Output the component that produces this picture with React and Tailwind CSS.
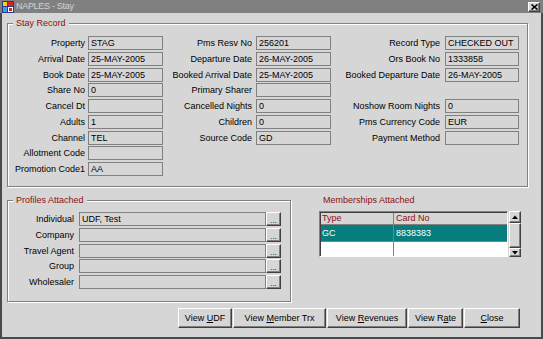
import React from 'react'

// Stay record: three columns of label/field rows
const STAY_COLUMNS = [
  {
    labelW: 'w-[77px]',
    gap: 'ml-[3px]',
    fieldW: 'w-[75px]',
    rows: [
      ['Property', 'STAG'],
      ['Arrival Date', '25-MAY-2005'],
      ['Book Date', '25-MAY-2005'],
      ['Share No', '0'],
      ['Cancel Dt', ''],
      ['Adults', '1'],
      ['Channel', 'TEL'],
      ['Allotment Code', ''],
      ['Promotion Code1', 'AA'],
    ],
  },
  {
    labelW: 'w-[89px]',
    gap: 'ml-[4px]',
    fieldW: 'w-[75px]',
    rows: [
      ['Pms Resv No', '256201'],
      ['Departure Date', '26-MAY-2005'],
      ['Booked Arrival Date', '25-MAY-2005'],
      ['Primary Sharer', ''],
      ['Cancelled Nights', '0'],
      ['Children', '0'],
      ['Source Code', 'GD'],
    ],
  },
  {
    labelW: 'w-[109px]',
    gap: 'ml-[5px]',
    fieldW: 'w-[74px]',
    rows: [
      ['Record Type', 'CHECKED OUT'],
      ['Ors Book No', '1333858'],
      ['Booked Departure Date', '26-MAY-2005'],
      null,
      ['Noshow Room Nights', '0'],
      ['Pms Currency Code', 'EUR'],
      ['Payment Method', ''],
    ],
  },
]

const PROFILES = [
  ['Individual', 'UDF, Test'],
  ['Company', ''],
  ['Travel Agent', ''],
  ['Group', ''],
  ['Wholesaler', ''],
]

function Field({ value, className = '' }) {
  return (
    <div className={`h-[14px] border border-[#808080] px-[2px] leading-[12px] whitespace-nowrap overflow-hidden ${className}`}>
      {value}
    </div>
  )
}

function Group({ title, className = '', children }) {
  return (
    <div className={`relative border border-[#808080] shadow-[inset_1px_1px_0_#fff,1px_1px_0_#fff] ${className}`}>
      <span className="absolute left-[5px] -top-[7px] px-[3px] bg-[#d6d6d6] leading-[12px] text-[#8b1010]">
        {title}
      </span>
      {children}
    </div>
  )
}

const raised = 'border border-t-white border-l-white border-r-[#404040] border-b-[#404040] shadow-[inset_-1px_-1px_0_#808080]'

function DialogButton({ w, children }) {
  return (
    <button className={`${w} h-[20px] ${raised} bg-[#d6d6d6] text-center leading-[17px]`}>
      {children}
    </button>
  )
}

function TitleIcon() {
  return (
    <svg width="12" height="12" viewBox="0 0 12 12">
      <rect x="0" y="0" width="12" height="12" fill="#2b3a8c" />
      <rect x="1" y="1" width="4" height="4" fill="#f2d21b" />
      <rect x="6" y="1" width="5" height="4" fill="#d8261c" />
      <rect x="1" y="6" width="4" height="5" fill="#3aa0e0" />
      <rect x="6" y="6" width="5" height="5" fill="#ffffff" />
      <rect x="7" y="7" width="3" height="3" fill="#d8261c" />
    </svg>
  )
}

export default function App() {
  return (
    <div className="w-[543px] h-[339px] flex flex-col bg-[#d6d6d6] text-black text-[9px] font-['Liberation_Sans',Arial,sans-serif]">
      {/* title bar */}
      <div className="h-[13px] flex items-center bg-[#808080] pl-[2px] pr-[3px]">
        <TitleIcon />
        <span className="ml-[2px] text-[9px] tracking-[-0.3px] text-[#d4d4d4]">NAPLES - Stay</span>
        <div className={`ml-auto w-[12px] h-[10px] ${raised} bg-[#d6d6d6] flex items-center justify-center`}>
          <svg width="7" height="6" viewBox="0 0 7 6">
            <path d="M0.5 0.5 L6.5 5.5 M6.5 0.5 L0.5 5.5" stroke="#000" strokeWidth="1.6" />
          </svg>
        </div>
      </div>

      <div className="flex-1 flex flex-col border-l-2 border-r-2 border-b-2 border-[#4a4a4a]">
        <Group title="Stay Record" className="mt-[10px] ml-[5px] w-[521px] h-[164px]">
          <div className="flex pt-[12px]">
            {STAY_COLUMNS.map((col, ci) => (
              <div key={ci} className="flex flex-col gap-[1.75px]">
                {col.rows.map((row, ri) =>
                  row ? (
                    <div key={ri} className="flex items-center">
                      <span className={`${col.labelW} text-right leading-[14px] whitespace-nowrap`}>{row[0]}</span>
                      <Field value={row[1]} className={`${col.gap} ${col.fieldW}`} />
                    </div>
                  ) : (
                    <div key={ri} className="h-[14px]" />
                  )
                )}
              </div>
            ))}
          </div>
        </Group>

        <div className="flex items-start mt-[7px]">
          <Group title="Profiles Attached" className="mt-[6px] ml-[5px] w-[284px] h-[102px]">
            <div className="flex flex-col gap-[1.75px] pt-[11px]">
              {PROFILES.map(([label, value]) => (
                <div key={label} className="flex items-center">
                  <span className="w-[66px] text-right leading-[14px]">{label}</span>
                  <Field value={value} className="ml-[5px] w-[187px]" />
                  <div className={`w-[15px] h-[14px] ${raised} bg-[#d6d6d6] flex items-end justify-center leading-[8px] text-[8px]`}>...</div>
                </div>
              ))}
            </div>
          </Group>

          <div className="ml-[28px] flex flex-col">
            <span className="pl-[4px] leading-[12px] text-[#8b1010]">Memberships Attached</span>
            <div className="mt-[5px] flex gap-[1px]">
              <div className="w-[189px] h-[46px] border border-t-[#808080] border-l-[#808080] border-r-white border-b-white shadow-[inset_1px_1px_0_#404040] pl-[1px] pt-[1px] flex flex-col">
                <div className="h-[12px] flex border-b border-[#808080] leading-[11px] text-[#8b1010]">
                  <span className="w-[73px] pl-[1px] border-r border-[#808080]">Type</span>
                  <span className="pl-[2px]">Card No</span>
                </div>
                <div className="h-[16px] flex bg-[#087d7d] text-white leading-[16px]">
                  <span className="w-[73px] pl-[1px] border-r border-[#808080]">GC</span>
                  <span className="pl-[2px]">8838383</span>
                </div>
                <div className="flex-1 flex bg-white border-t border-[#808080]">
                  <span className="w-[73px] border-r border-[#808080]" />
                </div>
              </div>
              <div className="w-[12px] h-[46px] flex flex-col">
                <div className={`h-[12px] ${raised} bg-[#d6d6d6] flex items-center justify-center`}>
                  <svg width="6" height="4" viewBox="0 0 6 4"><path d="M0 4 L3 0.5 L6 4 Z" fill="#000" /></svg>
                </div>
                <div className={`flex-1 ${raised} bg-[#d6d6d6]`} />
                <div className={`h-[9px] ${raised} bg-[#d6d6d6] flex items-center justify-center`}>
                  <svg width="6" height="4" viewBox="0 0 6 4"><path d="M0 0 L6 0 L3 3.5 Z" fill="#000" /></svg>
                </div>
              </div>
            </div>
          </div>
        </div>

        <div className="mt-[6px] ml-[176px] flex gap-[1px]">
          <DialogButton w="w-[54px]">View <span className="underline">U</span>DF</DialogButton>
          <DialogButton w="w-[93px]">View <span className="underline">M</span>ember Trx</DialogButton>
          <DialogButton w="w-[80px]">View <span className="underline">R</span>evenues</DialogButton>
          <DialogButton w="w-[55px]">View R<span className="underline">a</span>te</DialogButton>
          <DialogButton w="w-[56px]"><span className="underline">C</span>lose</DialogButton>
        </div>
      </div>
    </div>
  )
}
